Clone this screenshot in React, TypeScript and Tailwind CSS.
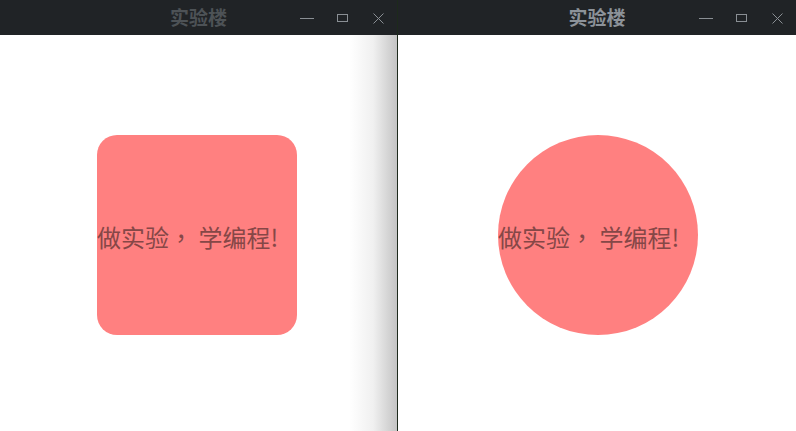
const cjk = { fontFamily: '"Noto Sans CJK TC", "Noto Sans", sans-serif' };

const WindowControls = () => (
  <div className="flex items-center gap-[20px] pr-[11px]">
    <svg width="16" height="16" viewBox="0 0 16 16">
      <line x1="2" y1="8.5" x2="16" y2="8.5" stroke="#8a8f94" strokeWidth="1" />
    </svg>
    <svg width="16" height="16" viewBox="0 0 16 16">
      <rect x="3.5" y="4.5" width="10" height="7" fill="none" stroke="#8a8f94" strokeWidth="1" />
    </svg>
    <svg width="16" height="16" viewBox="0 0 16 16">
      <path d="M3.5 3.5 L13.5 13.5 M13.5 3.5 L3.5 13.5" stroke="#8a8f94" strokeWidth="1" />
    </svg>
  </div>
);

const TitleBar = ({ active }: { active: boolean }) => (
  <div className="relative flex h-[35px] items-center justify-end bg-[#202326]">
    <span
      className={`absolute left-0 right-0 text-center text-[19px] font-bold ${active ? 'text-[#8c9299]' : 'text-[#4d5256]'}`}
      style={cjk}
    >
      实验楼
    </span>
    <div className="relative">
      <WindowControls />
    </div>
  </div>
);

export default function App() {
  return (
    <div className="flex h-[431px] w-[796px] bg-white" style={cjk}>
      <div className="flex w-[397px] flex-col">
        <TitleBar active={false} />
        <div className="flex flex-1 justify-center bg-[linear-gradient(to_right,#ffffff_0%,#ffffff_88%,#f0f0f0_94%,#c4c4c4_100%)] pr-[3px] pt-[100px]">
          <div className="flex h-[200px] w-[200px] items-center rounded-[20px] bg-[#ff8080]">
            <span className="whitespace-pre pt-[4px] text-[24px] text-[#864747]">做实验， 学编程!</span>
          </div>
        </div>
      </div>
      <div className="w-px bg-[#1d2a1c]" />
      <div className="flex flex-1 flex-col">
        <TitleBar active={true} />
        <div className="flex flex-1 justify-center pl-[2px] pt-[100px]">
          <div className="flex h-[200px] w-[200px] items-center rounded-full bg-[#ff8080]">
            <span className="whitespace-pre pt-[4px] text-[24px] text-[#864747]">做实验， 学编程!</span>
          </div>
        </div>
      </div>
    </div>
  );
}
